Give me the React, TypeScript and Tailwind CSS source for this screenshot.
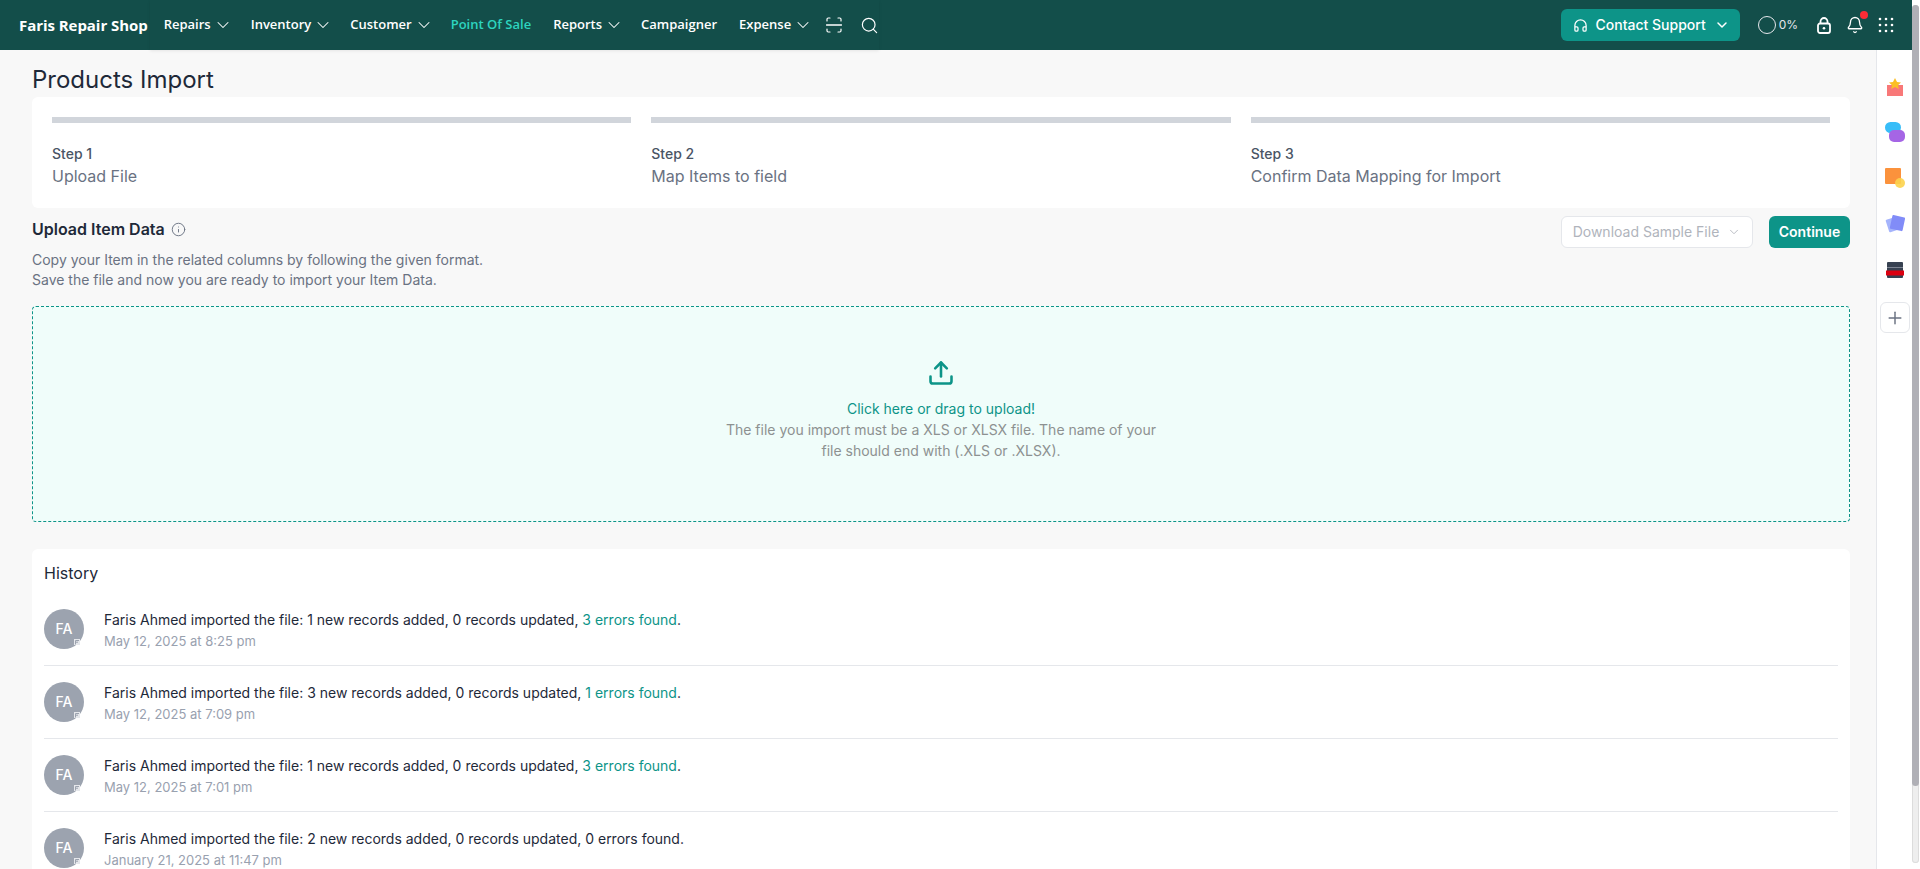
import { Bell, ChevronDown, Headphones, Info, Plus, Search, Upload } from "lucide-react";

const navItems = [
  { label: "Repairs", arrow: true, cls: "" },
  { label: "Inventory", arrow: true, cls: "ml-[18px]" },
  { label: "Customer", arrow: true, cls: "ml-[17px]" },
  { label: "Point Of Sale", active: true, cls: "ml-[17px]" },
  { label: "Reports", arrow: true, cls: "ml-[22px]" },
  { label: "Campaigner", cls: "ml-[17px]" },
  { label: "Expense", arrow: true, cls: "ml-[22px]" },
];

const steps = [
  { step: "Step 1", title: "Upload File" },
  { step: "Step 2", title: "Map Items to field" },
  { step: "Step 3", title: "Confirm Data Mapping for Import" },
];

const history = [
  { added: 1, errors: 3, date: "May 12, 2025 at 8:25 pm" },
  { added: 3, errors: 1, date: "May 12, 2025 at 7:09 pm" },
  { added: 1, errors: 3, date: "May 12, 2025 at 7:01 pm" },
  { added: 2, errors: 0, date: "January 21, 2025 at 11:47 pm" },
];

const ScanIcon = () => (
  <svg width="16" height="16" viewBox="0 0 16 16" fill="none" stroke="white" strokeWidth="1.2" strokeLinecap="round">
    <path d="M1 4V2.2C1 1.5 1.5 1 2.2 1H4M12 1h1.8c.7 0 1.2.5 1.2 1.2V4M15 12v1.8c0 .7-.5 1.2-1.2 1.2H12M4 15H2.2C1.5 15 1 14.500 1 13.800V12" />
    <path d="M0.500 8h15" strokeWidth="1.500" />
  </svg>
);

const LockIcon = () => (
  <svg width="14" height="17" viewBox="0 0 14 17" fill="none" stroke="white" strokeWidth="1.800">
    <rect x="1" y="6.500" width="12" height="9.500" rx="2" />
    <path d="M3.500 6.500V4.500a3.500 3.500 0 0 1 7 0v2" />
    <circle cx="7" cy="11.200" r="1.300" fill="white" stroke="none" />
  </svg>
);

const GridIcon = () => (
  <svg width="16" height="16" viewBox="0 0 16 16" fill="white">
    {[2, 8, 14].map((y) => [2, 8, 14].map((x) => <circle key={`${x}-${y}`} cx={x} cy={y} r="1.300" />))}
  </svg>
);

const GiftIcon = () => (
  <svg width="18" height="18" viewBox="0 0 18 18">
    <rect x="1" y="7" width="16" height="11" fill="#f87171" opacity="0.95" />
    <path d="M9 0l2 4 4 .5-3 2.700.8 3.800L9 9l-3.800 2 .8-3.800-3-2.700L7 4z" fill="#fbbf24" />
  </svg>
);

const ChatIcon = () => (
  <svg width="20" height="20" viewBox="0 0 20 20">
    <rect x="0" y="0" width="16" height="11" rx="5.500" fill="#38bdf8" />
    <rect x="4" y="8" width="16" height="12" rx="5" fill="#a565e5" />
  </svg>
);

const NoteIcon = () => (
  <svg width="20" height="20" viewBox="0 0 20 20">
    <rect x="0" y="0" width="16" height="16" rx="1" fill="#fb923c" />
    <circle cx="15" cy="15" r="5" fill="#fcd34d" opacity="0.9" />
  </svg>
);

const CardsIcon = () => (
  <svg width="20" height="20" viewBox="0 0 20 20">
    <rect x="2" y="4" width="13" height="13" rx="1" fill="#a5b4fc" transform="rotate(-18 8 10)" />
    <rect x="6" y="2" width="13" height="14" rx="1" fill="#818cf8" transform="rotate(12 12 9)" />
  </svg>
);

const PrinterIcon = () => (
  <svg width="18" height="16" viewBox="0 0 18 16">
    <rect x="1" y="0" width="16" height="16" rx="1" fill="#374151" />
    <rect x="1" y="5" width="16" height="0.700" fill="#9ca3af" />
    <rect x="0" y="8.500" width="18" height="5" fill="#dc0010" />
  </svg>
);

export default function App() {
  return (
    <div className="flex h-screen overflow-hidden bg-white font-['Inter',sans-serif]">
      <div className="flex min-w-0 flex-1 flex-col bg-[#f8f8f8]">
        <header className="flex h-[50px] shrink-0 items-center bg-[#134e4a] pl-[19px] pr-[18px] text-white">
          <span className="font-['Open_Sans',sans-serif] text-[15px] font-bold tracking-[-0.05px]">Faris Repair Shop</span>
          <nav className="ml-[2px] flex h-full items-center pl-[14px] shadow-[0_1px_3px_rgba(0,0,0,0.08)]">
            {navItems.map((item) => (
              <span
                key={item.label}
                className={`flex items-center gap-[2px] font-['Open_Sans',sans-serif] text-[13px] font-semibold ${item.cls} ${item.active ? "text-[#2dd4bf]" : "text-white"}`}
              >
                {item.label}
                {item.arrow && <ChevronDown size={20} strokeWidth={1.25} />}
              </span>
            ))}
            <span className="ml-[13px]">
              <ScanIcon />
            </span>
            <Search size={19} strokeWidth={1.5} className="ml-[18px]" />
          </nav>
          <div className="ml-auto flex h-8 w-[179px] items-center justify-center gap-[8px] rounded-md bg-[#0d9488] pl-[2px] text-sm font-medium">
            <Headphones size={15} strokeWidth={2} />
            Contact Support
            <ChevronDown size={16} strokeWidth={2.25} />
          </div>
          <span className="ml-[18px] h-[18px] w-[18px] rounded-full border-[1.500px] border-gray-200" />
          <span className="ml-[3px] text-xs text-gray-200">0%</span>
          <span className="ml-[19px]">
            <LockIcon />
          </span>
          <div className="relative ml-[15px]">
            <Bell size={18} strokeWidth={1.75} />
            <span className="absolute right-[-4px] top-[-5px] h-2 w-2 rounded-full bg-red-500" />
          </div>
          <span className="ml-[14px]">
            <GridIcon />
          </span>
        </header>

        <div className="flex min-h-0 flex-1">
          <main className="min-w-0 flex-1 pl-8 pr-[26px]">
            <h1 className="pt-[13px] text-2xl leading-[34px] text-gray-800">Products Import</h1>

            <section className="grid h-[111px] grid-cols-3 gap-5 rounded-md bg-white px-5 pt-5">
              {steps.map((s) => (
                <div key={s.step}>
                  <div className="h-1.5 bg-[#d1d5db]" />
                  <p className="mt-[21px] text-sm font-medium leading-5 text-gray-600">{s.step}</p>
                  <p className="mt-0 text-base leading-6 text-gray-500">{s.title}</p>
                </div>
              ))}
            </section>

            <section className="flex items-start justify-between pt-2">
              <div>
                <div className="flex items-center gap-[6px] pt-[1px]">
                  <h2 className="text-base font-semibold leading-[24px] text-gray-800">Upload Item Data</h2>
                  <Info size={15} strokeWidth={1.5} className="text-gray-500" />
                </div>
                <p className="mt-[9px] text-sm leading-5 text-gray-500">
                  Copy your Item in the related columns by following the given format.
                  <br />
                  Save the file and now you are ready to import your Item Data.
                </p>
              </div>
              <div className="flex gap-4">
                <div className="flex h-8 w-[192px] items-center justify-center gap-[8px] rounded-md border border-gray-200 bg-white text-sm text-[#b0b4bc]">
                  Download Sample File
                  <ChevronDown size={14} strokeWidth={1.5} />
                </div>
                <div className="flex h-8 w-[81px] items-center justify-center rounded-md bg-[#0d9488] text-sm font-semibold text-white">
                  Continue
                </div>
              </div>
            </section>

            <section className="mt-[16px] flex h-[216px] flex-col items-center rounded-[4px] border border-dashed border-[#0d9488] bg-[#f0fdfa] pt-[52px] text-center text-sm leading-[21px]">
              <Upload size={28} strokeWidth={2.2} className="text-[#0d9488]" />
              <p className="mt-[11px] text-[#0d9488]">Click here or drag to upload!</p>
              <p className="w-[440px] text-[#8d9191]">
                The file you import must be a XLS or XLSX file. The name of your file should end with (.XLS or .XLSX).
              </p>
            </section>

            <section className="mt-[27px] rounded-md bg-white px-3 pt-[12px]">
              <h3 className="text-base leading-[24px] text-gray-800">History</h3>
              <div className="mt-2">
                {history.map((h, i) => (
                  <div key={i} className="flex gap-5 border-b border-gray-200 py-4">
                    <div className="relative h-10 w-10 shrink-0 rounded-full bg-[#9ca3af] text-center text-sm font-medium leading-10 text-white">
                      FA
                      <svg className="absolute bottom-[4px] right-[4px]" width="6" height="6" viewBox="0 0 6 6">
                        <rect width="6" height="6" fill="#e5e7eb" />
                        <path d="M1.500 5.500V1.500H5M1.500 3.200H4" stroke="#9ca3af" fill="none" />
                      </svg>
                    </div>
                    <div className="h-10 pt-[1px]">
                      <p className="text-sm leading-5 text-gray-800">
                        Faris Ahmed imported the file: {h.added} new records added, 0 records updated,{" "}
                        {h.errors > 0 ? (
                          <>
                            <span className="text-[#0d9488]">{h.errors} errors found</span>.
                          </>
                        ) : (
                          "0 errors found."
                        )}
                      </p>
                      <p className="mt-[1px] text-[13px] leading-5 text-gray-400">{h.date}</p>
                    </div>
                  </div>
                ))}
              </div>
            </section>
          </main>

          <aside className="flex w-9 shrink-0 flex-col items-center border-l border-gray-200 bg-white pt-[28px]">
            <div className="flex h-[18px] items-center"><GiftIcon /></div>
            <div className="mt-[26px] flex h-5 items-center"><ChatIcon /></div>
            <div className="mt-[26px] flex h-5 items-center"><NoteIcon /></div>
            <div className="mt-[26px] flex h-5 items-center"><CardsIcon /></div>
            <div className="mt-[28px] flex h-4 items-center"><PrinterIcon /></div>
            <div className="mt-[24px] flex h-[31px] w-[30px] items-center justify-center rounded-md border border-gray-200">
              <Plus size={20} strokeWidth={1.75} className="text-gray-500" />
            </div>
          </aside>
        </div>
      </div>

      <div className="w-2 shrink-0 bg-white pb-[6px] pt-[5px] pr-px">
        <div className="h-full rounded-full bg-[#eeeeee] ring-1 ring-inset ring-[#dcdcdc]">
          <div className="h-[781px] rounded-full bg-[#b0b0b6]" />
        </div>
      </div>
    </div>
  );
}
